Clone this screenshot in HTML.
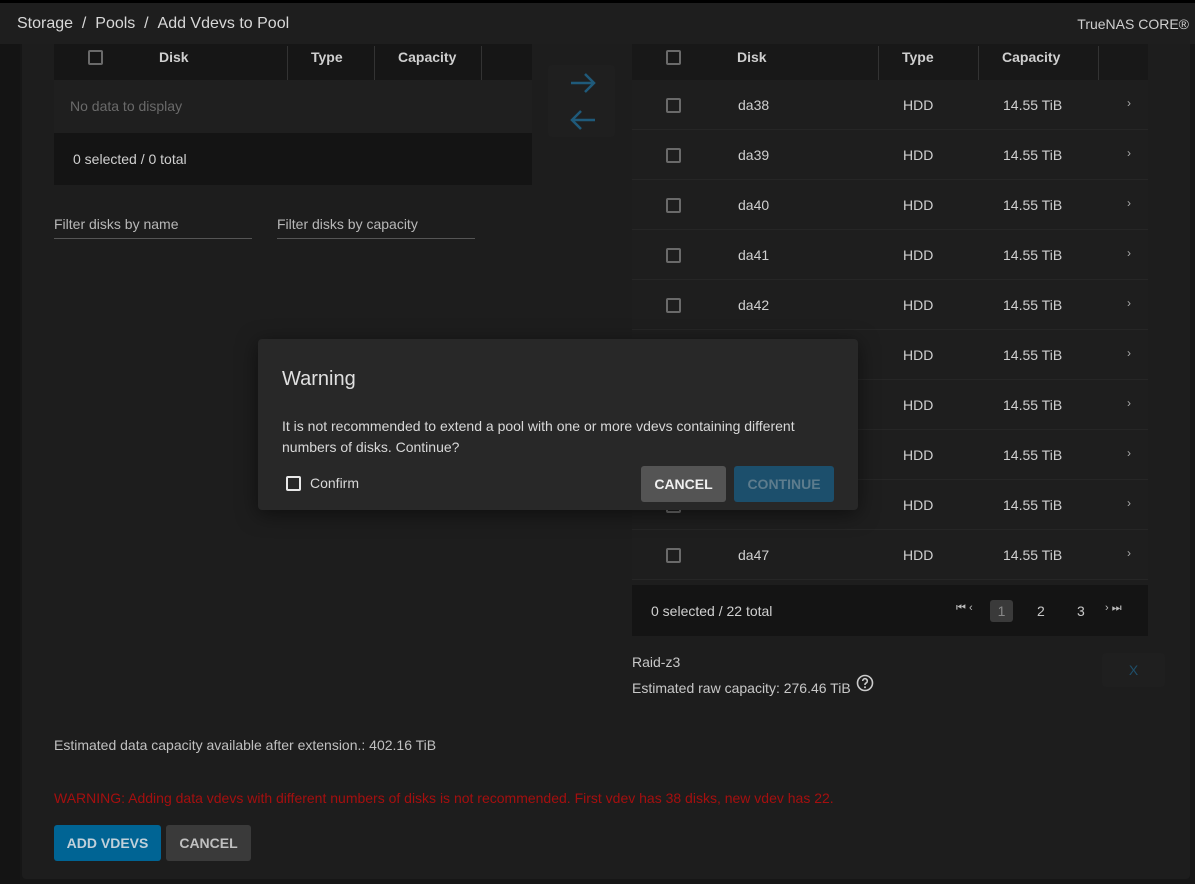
<!DOCTYPE html>
<html><head><meta charset="utf-8"><style>
*{box-sizing:border-box;margin:0;padding:0}
body{width:1195px;height:884px;background:#161616;font-family:"Liberation Sans",sans-serif;color:#cfcfcf;position:relative;overflow:hidden;font-size:14px}
.a{position:absolute}
.cb{position:absolute;width:15px;height:15px;border:2px solid #6a6a6a;border-radius:2px}
.hd{color:#cfcfcf;font-weight:bold;font-size:14px}
.sep{position:absolute;width:1px;background:#333}
</style></head><body>
<div class="a" style="left:0;top:0;width:1195px;height:3px;background:#000"></div>
<div class="a" style="left:0;top:3px;width:1195px;height:41px;background:#1e1e1e"></div>
<div class="a" style="left:17px;top:15px;font-size:16px;color:#d8d8d8">Storage&nbsp; / &nbsp;Pools&nbsp; / &nbsp;Add Vdevs to Pool</div>
<div class="a" style="right:6px;top:16px;font-size:14px;color:#d0d0d0">TrueNAS CORE®</div>
<div class="a" style="left:0;top:44px;width:20px;height:840px;background:#141414"></div>
<div class="a" style="left:22px;top:44px;width:1168px;height:835px;background:#1d1d1d;border-radius:0 0 4px 4px"></div>

<!-- left table -->
<div class="a" style="left:54px;top:44px;width:478px;height:36px;background:#161616"></div>
<div class="cb" style="left:88px;top:50px"></div>
<div class="a hd" style="left:159px;top:49px">Disk</div>
<div class="a hd" style="left:311px;top:49px">Type</div>
<div class="a hd" style="left:398px;top:49px">Capacity</div>
<div class="sep" style="left:287px;top:46px;height:34px"></div>
<div class="sep" style="left:374px;top:46px;height:34px"></div>
<div class="sep" style="left:481px;top:46px;height:34px"></div>
<div class="a" style="left:54px;top:80px;width:478px;height:53px;background:#1f1f1f"></div>
<div class="a" style="left:70px;top:98px;color:#6a6a6a">No data to display</div>
<div class="a" style="left:54px;top:133px;width:478px;height:52px;background:#141414"></div>
<div class="a" style="left:73px;top:151px;color:#d0d0d0">0 selected / 0 total</div>
<div class="a" style="left:54px;top:216px;color:#b8b8b8">Filter disks by name</div>
<div class="a" style="left:54px;top:238px;width:198px;height:1px;background:#555"></div>
<div class="a" style="left:277px;top:216px;color:#b8b8b8">Filter disks by capacity</div>
<div class="a" style="left:277px;top:238px;width:198px;height:1px;background:#555"></div>

<!-- arrows -->
<div class="a" style="left:548px;top:65px;width:67px;height:72px;background:#1f1f1f;border-radius:4px"></div>
<svg class="a" style="left:568px;top:70px" width="30" height="64" viewBox="0 0 30 64"><path d="M3 13H26M17 4L26 13L17 22" stroke="#1f5a7a" stroke-width="2.5" fill="none"/><path d="M27 50H4M13 41L4 50L13 59" stroke="#1f5a7a" stroke-width="2.5" fill="none"/></svg>

<!-- right table -->
<div class="a" style="left:632px;top:44px;width:516px;height:36px;background:#181818"></div>
<div class="cb" style="left:666px;top:50px"></div>
<div class="a hd" style="left:737px;top:49px">Disk</div>
<div class="a hd" style="left:902px;top:49px">Type</div>
<div class="a hd" style="left:1002px;top:49px">Capacity</div>
<div class="sep" style="left:878px;top:46px;height:34px"></div>
<div class="sep" style="left:978px;top:46px;height:34px"></div>
<div class="sep" style="left:1098px;top:46px;height:34px"></div>
<div class="a" style="left:632px;top:80px;width:516px;height:500px;background:#1e1e1e"></div>
<div id="rows"></div>
<div class="a" style="left:632px;top:585px;width:516px;height:51px;background:#141414"></div>
<div class="a" style="left:651px;top:603px;color:#d0d0d0">0 selected / 22 total</div>
<div class="a" style="left:956px;top:602px;font-size:11px;color:#bbb">⏮ ‹</div>
<div class="a" style="left:990px;top:600px;width:23px;height:22px;background:#3a3a3a;border-radius:3px;color:#888;text-align:center;line-height:22px">1</div>
<div class="a" style="left:1037px;top:603px;color:#c8c8c8">2</div>
<div class="a" style="left:1077px;top:603px;color:#c8c8c8">3</div>
<div class="a" style="left:1105px;top:602px;font-size:11px;color:#bbb">› ⏭</div>
<div class="a" style="left:632px;top:654px;color:#c8c8c8">Raid-z3</div>
<div class="a" style="left:632px;top:680px;color:#c8c8c8">Estimated raw capacity: 276.46 TiB</div>
<svg class="a" style="left:856px;top:674px" width="18" height="18" viewBox="0 0 18 18"><circle cx="9" cy="9" r="7.5" stroke="#ccc" stroke-width="1.6" fill="none"/><path d="M6.7 7a2.3 2.3 0 1 1 3.2 2.1c-.6.3-.9.7-.9 1.4v.5" stroke="#ccc" stroke-width="1.6" fill="none"/><circle cx="9" cy="13.3" r="1" fill="#ccc"/></svg>
<div class="a" style="left:1102px;top:653px;width:63px;height:34px;background:#1f1f1f;border-radius:4px;color:#1f4f6a;text-align:center;line-height:34px">X</div>

<div class="a" style="left:54px;top:737px;color:#c0c0c0">Estimated data capacity available after extension.: 402.16 TiB</div>
<div class="a" style="left:54px;top:790px;color:#a50f0f">WARNING: Adding data vdevs with different numbers of disks is not recommended. First vdev has 38 disks, new vdev has 22.</div>
<div class="a" style="left:54px;top:825px;width:107px;height:36px;background:#006494;border-radius:3px;color:#c0d0da;text-align:center;line-height:36px;font-weight:bold">ADD VDEVS</div>
<div class="a" style="left:166px;top:825px;width:85px;height:36px;background:#3a3a3a;border-radius:3px;color:#c0c0c0;text-align:center;line-height:36px;font-weight:bold">CANCEL</div>

<!-- dialog -->
<div class="a" style="left:258px;top:339px;width:600px;height:171px;background:#282828;border-radius:4px;box-shadow:0 4px 20px rgba(0,0,0,.5)"></div>
<div class="a" style="left:282px;top:368px;font-size:20px;color:#e0e0e0">Warning</div>
<div class="a" style="left:282px;top:416px;width:540px;line-height:21px;color:#d8d8d8">It is not recommended to extend a pool with one or more vdevs containing different numbers of disks. Continue?</div>
<div class="a" style="left:286px;top:476px;width:15px;height:15px;border:2px solid #e8e8e8;border-radius:2px"></div>
<div class="a" style="left:310px;top:475px;color:#d8d8d8">Confirm</div>
<div class="a" style="left:641px;top:466px;width:85px;height:36px;background:#545454;border-radius:3px;color:#f0f0f0;text-align:center;line-height:36px;font-weight:bold">CANCEL</div>
<div class="a" style="left:734px;top:466px;width:100px;height:36px;background:#1c4f6c;border-radius:3px;color:#5d7c8d;text-align:center;line-height:36px;font-weight:bold">CONTINUE</div>

<script>
var h='';var n=[38,39,40,41,42,43,44,45,46,47];
for(var i=0;i<10;i++){var y=80+i*50;var hide=(i>=5&&i<=8);
h+='<div class="a" style="left:632px;top:'+(y+49)+'px;width:516px;height:1px;background:#262626"></div>';
if(!hide||i==8){h+='<div class="cb" style="left:666px;top:'+(y+18)+'px"></div>';}
if(!hide){h+='<div class="a" style="left:738px;top:'+(y+17)+'px;color:#d0d0d0">da'+n[i]+'</div>';}
h+='<div class="a" style="left:903px;top:'+(y+17)+'px;color:#d0d0d0">HDD</div>';
h+='<div class="a" style="left:1003px;top:'+(y+17)+'px;color:#d0d0d0">14.55 TiB</div>';
h+='<div class="a" style="left:1127px;top:'+(y+16)+'px;color:#aaa;font-size:12px">›</div>';}
document.getElementById('rows').innerHTML=h;
</script>
</body></html>
